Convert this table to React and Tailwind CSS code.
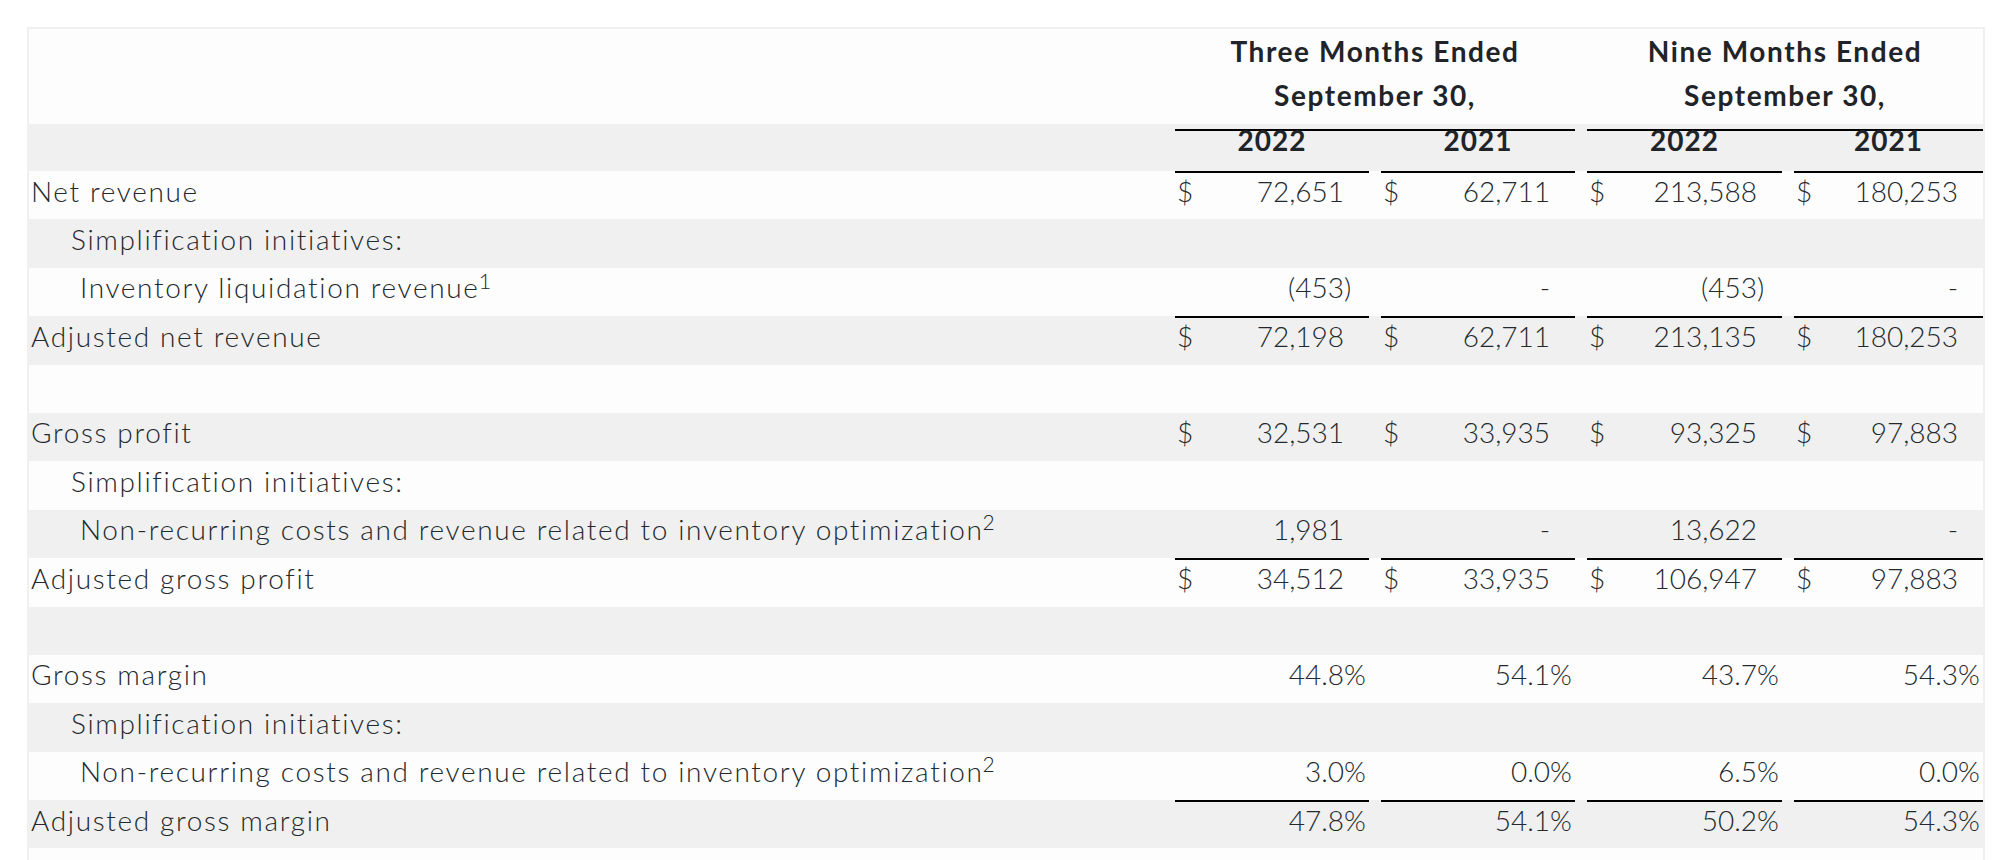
import React from "react";

const rows = [
  {
    label: "Net revenue",
    line: true,
    cells: [
      { cur: "$", v: "72,651" },
      { cur: "$", v: "62,711" },
      { cur: "$", v: "213,588" },
      { cur: "$", v: "180,253" },
    ],
  },
  { label: "Simplification initiatives:", indent: 1 },
  {
    label: "Inventory liquidation revenue",
    sup: "1",
    indent: 2,
    cells: [{ v: "(453", s: ")" }, { v: "-" }, { v: "(453", s: ")" }, { v: "-" }],
  },
  {
    label: "Adjusted net revenue",
    line: true,
    cells: [
      { cur: "$", v: "72,198" },
      { cur: "$", v: "62,711" },
      { cur: "$", v: "213,135" },
      { cur: "$", v: "180,253" },
    ],
  },
  { label: "" },
  {
    label: "Gross profit",
    cells: [
      { cur: "$", v: "32,531" },
      { cur: "$", v: "33,935" },
      { cur: "$", v: "93,325" },
      { cur: "$", v: "97,883" },
    ],
  },
  { label: "Simplification initiatives:", indent: 1 },
  {
    label: "Non-recurring costs and revenue related to inventory optimization",
    sup: "2",
    indent: 2,
    cells: [{ v: "1,981" }, { v: "-" }, { v: "13,622" }, { v: "-" }],
  },
  {
    label: "Adjusted gross profit",
    line: true,
    cells: [
      { cur: "$", v: "34,512" },
      { cur: "$", v: "33,935" },
      { cur: "$", v: "106,947" },
      { cur: "$", v: "97,883" },
    ],
  },
  { label: "" },
  {
    label: "Gross margin",
    cells: [
      { v: "44.8", s: "%" },
      { v: "54.1", s: "%" },
      { v: "43.7", s: "%" },
      { v: "54.3", s: "%" },
    ],
  },
  { label: "Simplification initiatives:", indent: 1 },
  {
    label: "Non-recurring costs and revenue related to inventory optimization",
    sup: "2",
    indent: 2,
    cells: [
      { v: "3.0", s: "%" },
      { v: "0.0", s: "%" },
      { v: "6.5", s: "%" },
      { v: "0.0", s: "%" },
    ],
  },
  {
    label: "Adjusted gross margin",
    line: true,
    cells: [
      { v: "47.8", s: "%" },
      { v: "54.1", s: "%" },
      { v: "50.2", s: "%" },
      { v: "54.3", s: "%" },
    ],
  },
  { label: "" },
];

const indents = ["pl-[2px]", "pl-[42px]", "pl-[51px]"];
const colPad = ["px-[6px]", "px-[6px]", "px-[6px]", "pl-[6px] pr-0"];

function ValueCell({ cell, line, pad }) {
  return (
    <div className={`h-full ${pad}`}>
      <div
        className={`flex h-full border-t-2 pt-[1.5px] ${
          line ? "border-black" : "border-transparent"
        }`}>
        <span className="pl-[2px] w-[30px]">{cell ? cell.cur : ""}</span>
        <span className="flex-1 text-right">{cell ? cell.v : ""}</span>
        <span className="w-[25px] text-left">{cell ? cell.s : ""}</span>
      </div>
    </div>
  );
}

function Row({ row, index }) {
  const bg = index % 2 === 0 ? "bg-[#fdfdfd]" : "bg-[#f0f0f0]";
  return (
    <div className={`grid grid-cols-[1140px_206px_206px_207px_195px] h-[48.4px] ${bg}`}>
      <div className={`pt-[3.5px] whitespace-nowrap tracking-[1.65px] ${indents[row.indent || 0]}`}>
        {row.label}
        {row.sup === "1" && (
          <sup className="text-[22px] top-[-0.4em] ml-[-1px] tracking-normal">{row.sup}</sup>
        )}
        {row.sup === "2" && (
          <sup className="text-[21px] ml-[-1px] tracking-normal">{row.sup}</sup>
        )}
      </div>
      {[0, 1, 2, 3].map((i) => (
        <ValueCell
          key={i}
          cell={row.cells ? row.cells[i] : null}
          line={row.line}
          pad={colPad[i]}
        />
      ))}
    </div>
  );
}

export default function App() {
  return (
    <div className="min-h-screen bg-white pt-[27px] pl-[27px] font-['Lato',sans-serif] text-[28px] leading-[33.6px] text-[#23292d] font-light">
      <div className="w-[1958px] border-2 border-b-0 border-[#f0f0f0]">
        {/* period headers */}
        <div className="grid grid-cols-[1140px_206px_206px_207px_195px] h-[95px] bg-[#fdfdfd] font-bold text-[#202428] tracking-[1.6px]">
          <div />
          <div className="col-span-2 px-[6px] h-full">
            <div className="h-full flex flex-col justify-end items-center border-b-2 border-black pb-[12px] leading-[44px]">
              <span>Three Months Ended</span>
              <span>September 30,</span>
            </div>
          </div>
          <div className="col-span-2 pl-[6px] h-full">
            <div className="h-full flex flex-col justify-end items-center border-b-2 border-black pb-[12px] leading-[44px]">
              <span>Nine Months Ended</span>
              <span>September 30,</span>
            </div>
          </div>
        </div>
        {/* years */}
        <div className="grid grid-cols-[1140px_206px_206px_207px_195px] h-[47px] bg-[#f0f0f0] font-bold text-[#202428] tracking-[1px]">
          <div />
          {["2022", "2021", "2022", "2021"].map((y, i) => (
            <div key={i} className={`text-center ${colPad[i]}`}>
              {y}
            </div>
          ))}
        </div>
        {rows.map((row, index) => (
          <Row row={row} index={index} key={index} />
        ))}
      </div>
    </div>
  );
}
